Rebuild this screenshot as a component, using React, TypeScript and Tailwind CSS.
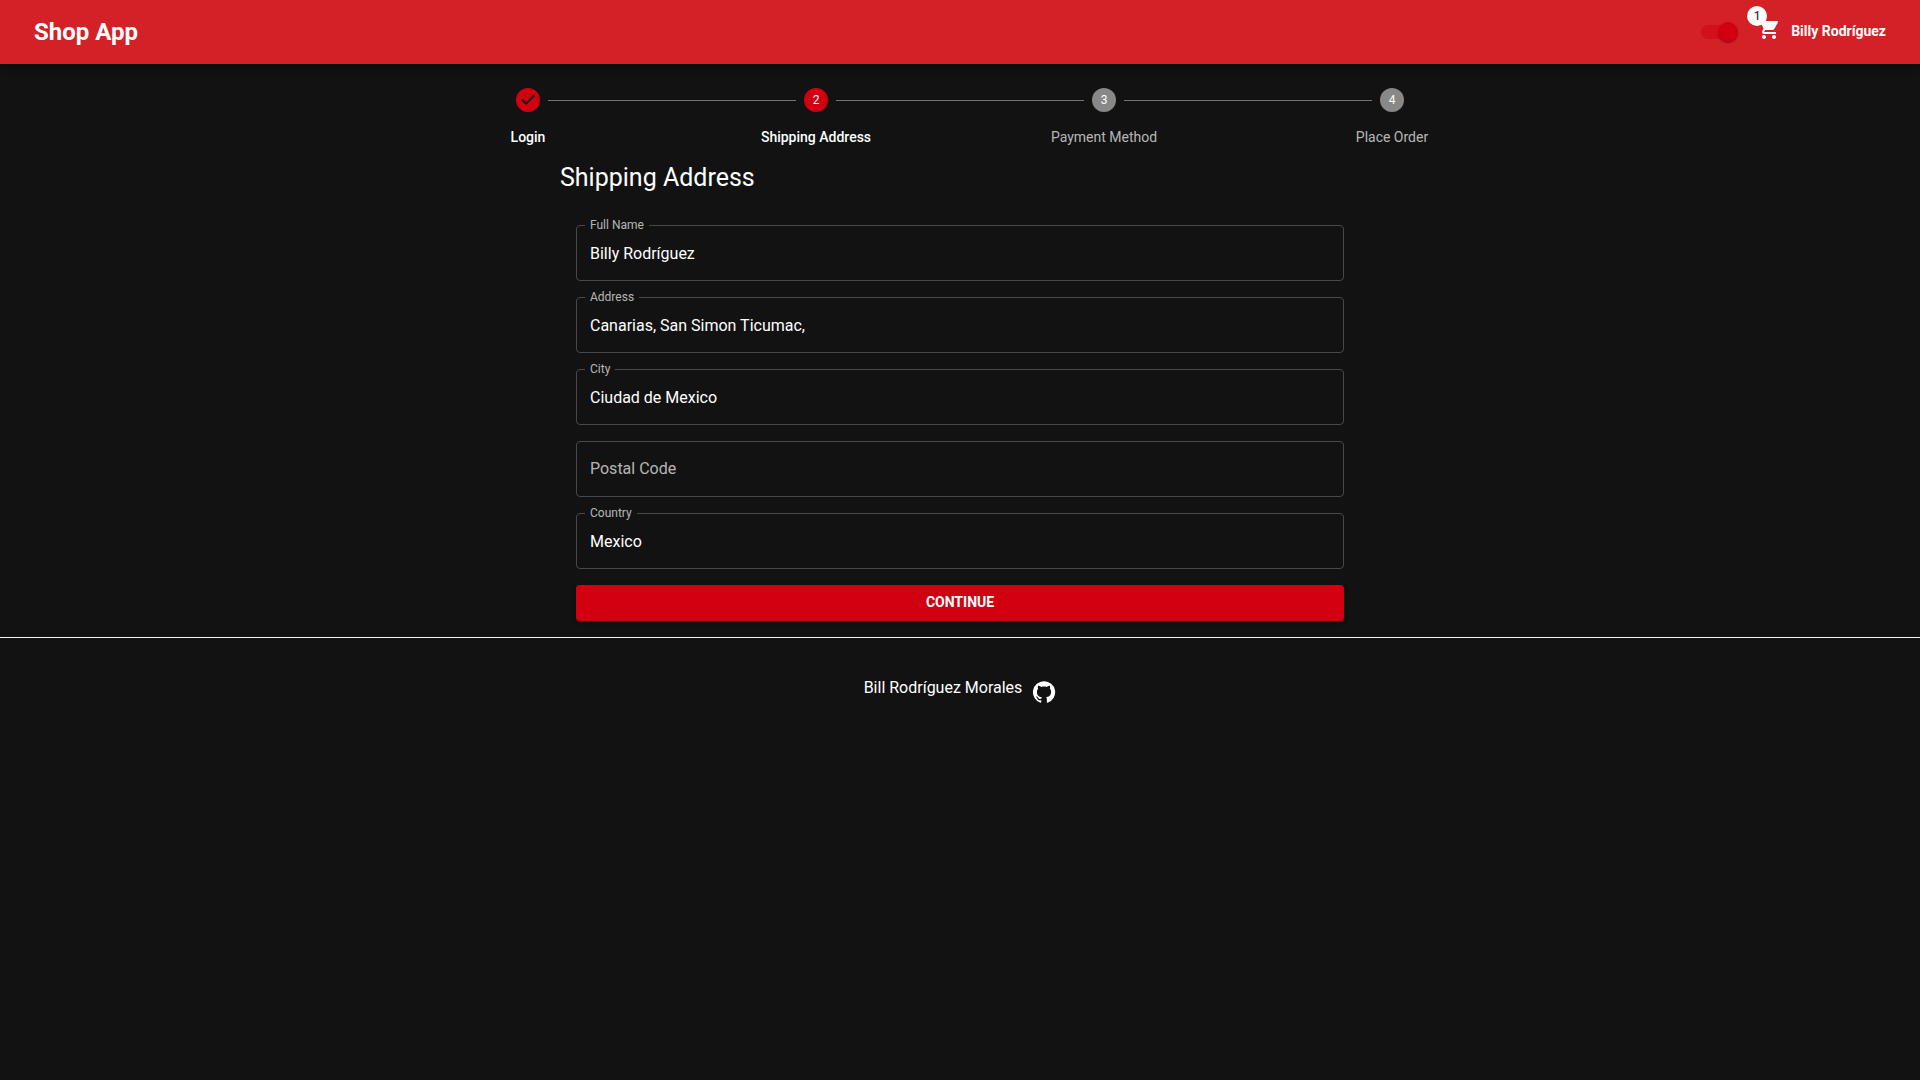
import { useState } from "react";

const steps = ["Login", "Shipping Address", "Payment Method", "Place Order"];
const activeStep = 1;

const initialFields = [
  { id: "fullName", label: "Full Name", value: "Billy Rodríguez" },
  { id: "address", label: "Address", value: "Canarias, San Simon Ticumac," },
  { id: "city", label: "City", value: "Ciudad de Mexico" },
  { id: "postalCode", label: "Postal Code", value: "" },
  { id: "country", label: "Country", value: "Mexico" },
];

function Header() {
  const [dark, setDark] = useState(true);
  return (
    <header className="flex h-16 items-center justify-between bg-[#d32127] pr-[34px] pl-[34px] shadow-[0_2px_4px_-1px_rgba(0,0,0,0.2),0_4px_5px_rgba(0,0,0,0.14),0_1px_10px_rgba(0,0,0,0.12)]">
      <a href="#" className="text-2xl font-bold">
        Shop App
      </a>
      <div className="flex items-center">
        <input
          type="checkbox"
          role="switch"
          aria-label="Dark mode"
          checked={dark}
          onChange={(e) => setDark(e.target.checked)}
          className="relative mr-5 h-5 w-9 cursor-pointer appearance-none before:absolute before:top-[3px] before:left-0 before:h-[14px] before:w-[34px] before:rounded-full before:bg-[#d00010]/50 after:absolute after:top-0 after:left-0 after:size-5 after:rounded-full after:bg-[#d00010] after:shadow-[0_2px_1px_-1px_rgba(0,0,0,0.2),0_1px_1px_rgba(0,0,0,0.14),0_1px_3px_rgba(0,0,0,0.12)] checked:after:left-[17px]"
        />
        <a href="#" aria-label="Cart, 1 item" className="relative mr-2.5 mb-1.5">
          <svg viewBox="0 0 24 24" className="size-6 fill-white" aria-hidden="true">
            <path d="M7 18c-1.1 0-1.99.9-1.99 2S5.9 22 7 22s2-.9 2-2-.9-2-2-2zM1 2v2h2l3.6 7.59-1.35 2.45c-.16.28-.25.61-.25.96 0 1.1.9 2 2 2h12v-2H7.42c-.14 0-.25-.11-.25-.25l.03-.12.9-1.63h7.45c.75 0 1.41-.41 1.75-1.03l3.58-6.49c.08-.14.12-.31.12-.48 0-.55-.45-1-1-1H5.21l-.94-2H1zm16 16c-1.1 0-1.99.9-1.99 2s.89 2 1.99 2 2-.9 2-2-.9-2-2-2z" />
          </svg>
          <span className="absolute -top-[11px] -left-2.5 flex size-5 items-center justify-center rounded-full bg-white text-xs leading-none font-medium text-[#3c3c3c]">
            1
          </span>
        </a>
        <button type="button" className="pb-0.5 text-sm font-bold">
          Billy Rodríguez
        </button>
      </div>
    </header>
  );
}

function Stepper() {
  return (
    <ol className="flex">
      {steps.map((label, i) => (
        <li key={label} className="flex flex-1 flex-col items-center gap-4">
          <div className="flex w-full items-center">
            <span className="h-6 flex-1" />
            <span
              className={
                i <= activeStep
                  ? "flex size-6 items-center justify-center rounded-full bg-[#d00010] text-xs"
                  : "flex size-6 items-center justify-center rounded-full bg-[#888888] text-xs"
              }
            >
              {i < activeStep ? (
                <svg viewBox="0 0 24 24" className="size-6" aria-label="Completed">
                  <path
                    d="M10 17l-5-5 1.4-1.4 3.6 3.6 7.6-7.6L19 8l-9 9z"
                    fill="#121212"
                  />
                </svg>
              ) : (
                i + 1
              )}
            </span>
            <span className="relative h-6 flex-1">
              {i < steps.length - 1 && (
                <span className="absolute top-3 left-2 h-px w-[calc(200%-16px)] bg-[#757575]" />
              )}
            </span>
          </div>
          <span
            className={
              i <= activeStep
                ? "text-sm leading-[18px] font-medium"
                : "text-sm leading-[18px] text-white/70"
            }
          >
            {label}
          </span>
        </li>
      ))}
    </ol>
  );
}

function Field({ id, label, initial }: { id: string; label: string; initial: string }) {
  const [value, setValue] = useState(initial);
  return (
    <div className="relative">
      <input
        id={id}
        name={id}
        value={value}
        onChange={(e) => setValue(e.target.value)}
        className="block h-14 w-full rounded border border-[#484848] bg-transparent px-[13px] text-base text-white outline-none focus:border-[#d00010]"
      />
      <label
        htmlFor={id}
        className={
          value
            ? "absolute -top-2 left-[9px] bg-[#121212] px-[5px] text-xs leading-4 text-white/70"
            : "absolute top-4 left-[14px] text-base text-white/70"
        }
      >
        {label}
      </label>
    </div>
  );
}

export default function App() {
  return (
    <div className="min-h-screen bg-[#121212] font-['Roboto',sans-serif] text-white">
      <Header />
      <main className="mx-auto max-w-6xl pt-6">
        <Stepper />
        <form
          className="mx-auto max-w-[800px] pt-3.5 pb-4"
          onSubmit={(e) => e.preventDefault()}
        >
          <h1 className="mb-[29px] text-[25px] leading-9">Shipping Address</h1>
          <div className="flex flex-col gap-4 px-4">
            {initialFields.map((f) => (
              <Field key={f.id} id={f.id} label={f.label} initial={f.value} />
            ))}
            <button
              type="submit"
              className="h-9 rounded bg-[#d00010] pb-0.5 text-sm font-bold uppercase shadow-[0_3px_1px_-2px_rgba(0,0,0,0.2),0_2px_2px_rgba(0,0,0,0.14),0_1px_5px_rgba(0,0,0,0.12)]"
            >
              Continue
            </button>
          </div>
        </form>
      </main>
      <footer className="flex items-start justify-center gap-2.5 border-t border-[#f5f5f5] pt-[38px]">
        <p className="text-base">Bill Rodríguez Morales</p>
        <a href="#" aria-label="GitHub" className="pt-1">
          <svg viewBox="0 0 24 24" className="size-6 fill-white" aria-hidden="true">
            <path d="M12 1.27a11 11 0 00-3.48 21.46c.55.09.73-.28.73-.55v-1.84c-3.03.64-3.67-1.46-3.67-1.46-.55-1.29-1.28-1.65-1.28-1.65-.92-.65.1-.65.1-.65 1.1 0 1.73 1.1 1.73 1.1.92 1.65 2.57 1.2 3.21.92a2 2 0 01.64-1.47c-2.47-.27-5.04-1.19-5.04-5.5 0-1.1.46-2.1 1.2-2.84a3.76 3.76 0 010-2.93s.91-.28 3.11 1.1c1.8-.49 3.7-.49 5.5 0 2.1-1.38 3.02-1.1 3.02-1.1a3.76 3.76 0 01.1 2.93c.83.74 1.2 1.74 1.2 2.94 0 4.21-2.57 5.13-5.04 5.4.45.37.82.92.82 2.02v3.03c0 .27.1.64.73.55A11 11 0 0012 1.27" />
          </svg>
        </a>
      </footer>
    </div>
  );
}
